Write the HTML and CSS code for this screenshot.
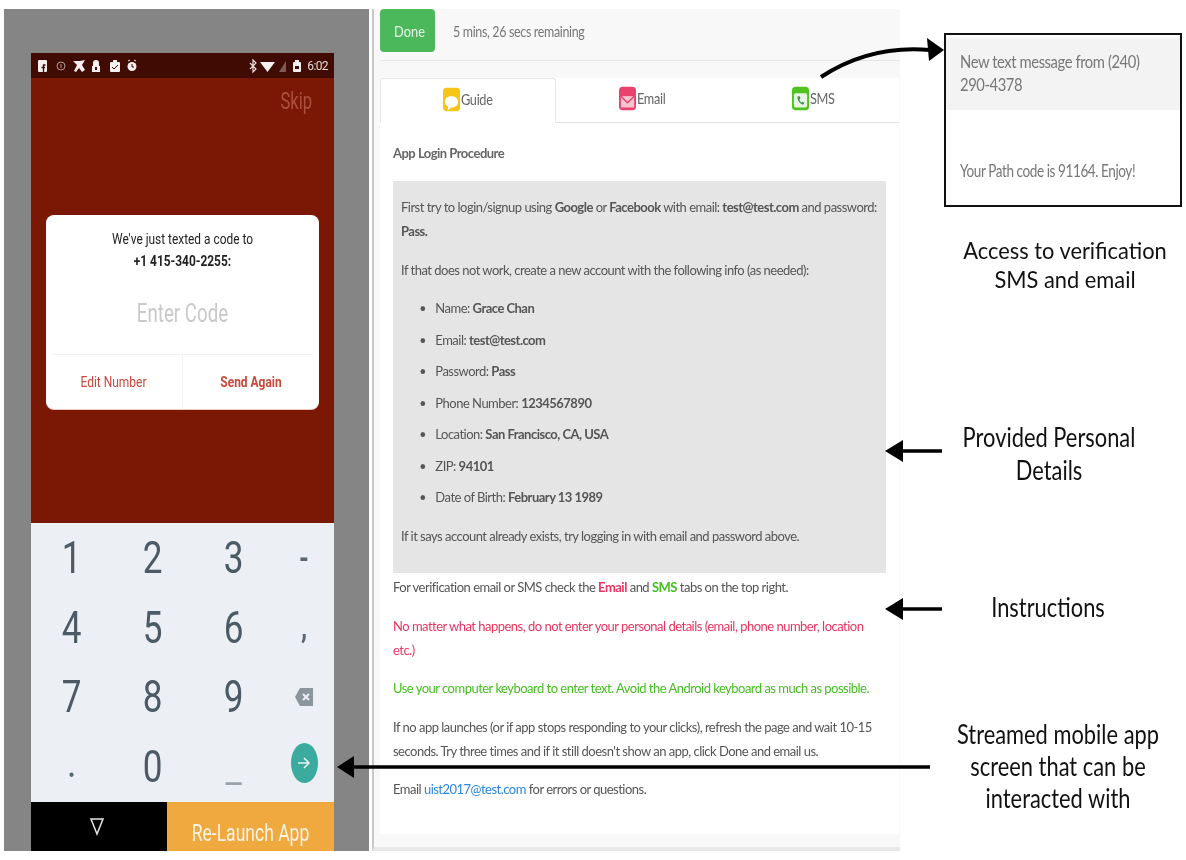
FILE: index.html
```html
<!DOCTYPE html>
<html lang="en">
<head>
    <meta charset="UTF-8">
    <title>Streamed app study figure</title>
    <link rel="stylesheet" href="styles.css">
</head>
<body>
    <div class="figure">
        <div class="device-panel">
            <div class="phone">
                <div class="status-bar">
                    <svg class="status-icons left" width="112" height="16" viewBox="0 0 112 16">
                        <rect x="7" y="2" width="9" height="12" rx="1" fill="#f4eeee"/>
                        <path d="M12.500 14V7h2M10.500 9.500h3.500" stroke="#3f0b02" stroke-width="1.300" fill="none"/>
                        <circle cx="30" cy="8" r="4" fill="none" stroke="#b59a94"/>
                        <path d="M30 6v4" stroke="#b59a94"/>
                        <path d="M42 3h7l5-1-3 5 3 5-3 2-3-4-3 4-2-1 3-6z" fill="#f4eeee"/>
                        <path d="M62 8V5a3 3 0 0 1 6 0v3h1v6h-8V8z" fill="#f4eeee"/>
                        <rect x="64" y="9" width="2" height="3" fill="#3f0b02"/>
                        <rect x="79" y="4" width="10" height="10" rx="1" fill="#f4eeee"/>
                        <rect x="82" y="2" width="4" height="2" fill="#f4eeee"/>
                        <path d="M81 9l2 2 4-4" stroke="#3f0b02" fill="none"/>
                        <circle cx="101" cy="8.500" r="4.500" fill="#f4eeee"/>
                        <path d="M97 3l2-1M105 3l-2-1" stroke="#f4eeee"/>
                        <path d="M101 6v3h2" stroke="#3f0b02" fill="none"/>
                    </svg>
                    <svg class="status-icons" width="56" height="16" viewBox="0 0 56 16">
                        <path d="M2 5l6 6-3 3V2l3 3-6 6" stroke="#e8dcda" stroke-width="1.200" fill="none"/>
                        <path d="M12 4h15l-7.500 10z" fill="#f6f2f2"/>
                        <path d="M31 14l7-11v11z" fill="#7d5a52"/>
                        <rect x="45" y="4" width="8" height="10" rx="1" fill="#f4eeee"/>
                        <rect x="47" y="2" width="4" height="2" fill="#f4eeee"/>
                        <rect x="47" y="8" width="4" height="3" fill="#3f0b02"/>
                    </svg>
                    <span class="clock">6:02</span>
                </div>
                <div class="app-screen">
                    <div class="skip">Skip</div>
                    <div class="code-dialog">
                        <div class="code-msg">We've just texted a code to<br><strong>+1 415-340-2255:</strong></div>
                        <div class="code-input">Enter Code</div>
                        <div class="code-actions">
                            <div class="code-btn edit"><span>Edit Number</span></div>
                            <div class="code-btn send"><span>Send Again</span></div>
                        </div>
                    </div>
                </div>
                <div class="keypad">
                    <span class="key">1</span><span class="key">2</span><span class="key">3</span><span class="key small">-</span>
                    <span class="key">4</span><span class="key">5</span><span class="key">6</span><span class="key small">,</span>
                    <span class="key">7</span><span class="key">8</span><span class="key">9</span>
                    <span class="key icon">
                        <svg width="20" height="22" viewBox="0 0 20 22">
                            <path d="M6 2h13v18H6l-5-9z" fill="#8b959c"/>
                            <path d="M9 8l6 6M15 8l-6 6" stroke="#eceff3" stroke-width="2"/>
                        </svg>
                    </span>
                    <span class="key small">.</span><span class="key">0</span><span class="key underscore">_</span>
                    <span class="key icon">
                        <span class="go-btn">
                            <svg width="14" height="16" viewBox="0 0 14 16">
                                <path d="M1 8h11M7 3l5 5-5 5" stroke="#e8f5f3" stroke-width="1.500" fill="none"/>
                            </svg>
                        </span>
                    </span>
                </div>
                <div class="phone-bottom">
                    <div class="nav-back">
                        <svg width="14" height="19" viewBox="0 0 14 19">
                            <path d="M1 2h12L7 17z" fill="none" stroke="#e6e6e6" stroke-width="1.500"/>
                        </svg>
                    </div>
                    <div class="relaunch"><span>Re-Launch App</span></div>
                </div>
            </div>
        </div>

        <div class="web-panel">
            <div class="top-row">
                <button class="done-btn"><span>Done</span></button>
                <span class="time-left">5 mins, 26 secs remaining</span>
            </div>
            <div class="card">
                <div class="tabs">
                    <div class="tab active">
                        <svg class="tab-icon" width="17" height="25" viewBox="0 0 18 25">
                            <rect width="18" height="25" rx="4" fill="#f6c516"/>
                            <path d="M9 9c4 0 7 2 7 6s-3 6-7 6l-4 3 .5-4C3 19 2 17 2 15c0-4 3-6 7-6z" fill="#fff"/>
                        </svg>
                        <span class="tab-label">Guide</span>
                    </div>
                    <div class="tab">
                        <svg class="tab-icon" width="17" height="25" viewBox="0 0 18 25">
                            <rect width="18" height="25" rx="4" fill="#e9436d"/>
                            <rect x="2" y="10" width="14" height="12" fill="#f7c4d0"/>
                            <path d="M2 10l7 7 7-7" fill="none" stroke="#e9436d" stroke-width="1.500"/>
                        </svg>
                        <span class="tab-label">Email</span>
                    </div>
                    <div class="tab">
                        <svg class="tab-icon" width="17" height="25" viewBox="0 0 18 25">
                            <rect width="18" height="25" rx="4" fill="#4fc31f"/>
                            <rect x="2" y="7" width="14" height="15" rx="2" fill="#e8f5e4"/>
                            <path d="M6 10c-1 3 2 8 6 9l1-2-2-1-1 1c-1-1-2-2-2-4l1-1-1-2z" fill="#3c8f4a"/>
                        </svg>
                        <span class="tab-label">SMS</span>
                    </div>
                </div>
                <div class="guide">
                    <h4 class="guide-title">App Login Procedure</h4>
                    <div class="details-box">
                        <p>First try to login/signup using <b>Google</b> or <b>Facebook</b> with email: <b>test@test.com</b> and password:<br><b>Pass.</b></p>
                        <p>If that does not work, create a new account with the following info (as needed):</p>
                        <ul class="details-list">
                            <li>Name: <b>Grace Chan</b></li>
                            <li>Email: <b>test@test.com</b></li>
                            <li>Password: <b>Pass</b></li>
                            <li>Phone Number: <b>1234567890</b></li>
                            <li>Location: <b>San Francisco, CA, USA</b></li>
                            <li>ZIP: <b>94101</b></li>
                            <li>Date of Birth: <b>February 13 1989</b></li>
                        </ul>
                        <p>If it says account already exists, try logging in with email and password above.</p>
                    </div>
                    <p class="first">For verification email or SMS check the <b class="red">Email</b> and <b class="green">SMS</b> tabs on the top right.</p>
                    <p class="red">No matter what happens, do not enter your personal details (email, phone number, location<br>etc.)</p>
                    <p class="green">Use your computer keyboard to enter text. Avoid the Android keyboard as much as possible.</p>
                    <p>If no app launches (or if app stops responding to your clicks), refresh the page and wait 10-15<br>seconds. Try three times and if it still doesn't show an app, click Done and email us.</p>
                    <p>Email <span class="blue">uist2017@test.com</span> for errors or questions.</p>
                </div>
            </div>
        </div>

        <div class="notes">
            <div class="sms-box">
                <div class="sms-head">
                    <span class="sms-line">New text message from (240)</span>
                    <span class="sms-line">290-4378</span>
                </div>
                <div class="sms-body">
                    <span class="sms-line">Your Path code is 91164. Enjoy!</span>
                </div>
            </div>
            <div class="note note-access">Access to verification<br>SMS and email</div>
            <div class="note note-details">Provided Personal<br>Details</div>
            <div class="note note-instr">Instructions</div>
            <div class="note note-stream">Streamed mobile app<br>screen that can be<br>interacted with</div>
        </div>

        <svg class="arrows" width="1186" height="860" viewBox="0 0 1186 860">
            <path d="M821 77C850 58 885 46 930 50" fill="none" stroke="#000" stroke-width="4"/>
            <path d="M944 50l-17-12 2 23z" fill="#000"/>
            <path d="M900 451h42M900 609h42M350 767h580" fill="none" stroke="#000" stroke-width="3.500"/>
            <path d="M885 451l18-11v22zM885 609l18-11v22zM337 767l17-11v22z" fill="#000"/>
        </svg>
    </div>
</body>
</html>
```

FILE: styles.css
```css
body {
    margin: 0;
    background: #fff;
    font-family: "Lato", sans-serif;
}
.figure {
    position: relative;
    width: 1186px;
    height: 860px;
    display: flex;
    overflow: hidden;
    padding-top: 9px;
    box-sizing: border-box;
}

/* phone side */
.device-panel {
    width: 365px;
    height: 842px;
    margin-left: 4px;
    background: #858585;
    padding: 44px 35px 0 27px;
    box-sizing: border-box;
    flex-shrink: 0;
    filter: blur(.4px);
}
.phone {
    height: 798px;
    display: flex;
    flex-direction: column;
    font-family: "Roboto", sans-serif;
}
.status-bar {
    height: 25px;
    background: #3f0b02;
    display: flex;
    align-items: center;
    color: #e8dcda;
    font-size: 12px;
    padding: 0 6px 0 0;
}
.status-icons {
    flex-shrink: 0;
}
.status-icons.left {
    margin-right: auto;
}
.clock {
    margin-left: 3px;
    letter-spacing: -.6px;
}
.app-screen {
    height: 445px;
    background: #7a1805;
    box-sizing: border-box;
    padding: 11px 15px 0;
}
.skip {
    text-align: right;
    color: #a9513f;
    font-size: 23px;
    line-height: 26px;
    margin-right: 7px;
    transform: scaleX(.72);
    transform-origin: right;
}
.code-dialog {
    background: #fff;
    border-radius: 8px;
    height: 194px;
    margin-top: 100px;
    display: flex;
    flex-direction: column;
    box-shadow: 0 1px 0 #e9c9c2;
}
.code-msg {
    text-align: center;
    color: #222;
    font-size: 14px;
    line-height: 22px;
    padding-top: 13px;
    transform: scaleX(.85);
}
.code-msg strong {
    font-weight: 700;
}
.code-input {
    text-align: center;
    color: #c9c9c9;
    font-size: 26px;
    line-height: 30px;
    margin-top: 26px;
    transform: scaleX(.72);
}
.code-actions {
    margin: auto 6px 0;
    height: 54px;
    border-top: 1px solid #f4f1f0;
    display: flex;
}
.code-btn {
    text-align: center;
    color: #c8483a;
    font-size: 14.500px;
    line-height: 56px;
    box-sizing: border-box;
}
.code-btn span {
    display: block;
    transform: scaleX(.825);
}
.code-btn.edit {
    width: 131px;
    padding-right: 7px;
    border-right: 1px solid #f6f3f2;
}
.code-btn.send {
    flex: 1;
    font-weight: 700;
    padding-left: 6px;
}
.keypad {
    flex: 1;
    background: #eceff3;
    display: grid;
    grid-template-columns: 81px 81px 81px 60px;
    grid-auto-rows: 69.500px;
    color: #4b5a64;
}
.key {
    display: flex;
    align-items: center;
    justify-content: center;
    font-size: 45px;
    transform: scaleX(.78);
}
.key.icon {
    transform: none;
}
.key.small {
    font-size: 32px;
    font-weight: 700;
    color: #5a6770;
}
.key.underscore {
    color: #9aa3aa;
    font-size: 36px;
    padding-top: 8px;
    box-sizing: border-box;
    transform: none;
}
.go-btn {
    width: 27px;
    height: 40px;
    margin-bottom: 6px;
    border-radius: 50%;
    background: #3aab9e;
    display: flex;
    align-items: center;
    justify-content: center;
}
.phone-bottom {
    height: 49px;
    display: flex;
}
.nav-back {
    width: 136px;
    background: #000;
    display: flex;
    align-items: center;
    justify-content: center;
    padding-right: 5px;
    box-sizing: border-box;
}
.relaunch {
    flex: 1;
    background: #efa93f;
    color: #fdf3e2;
    text-align: center;
    font-size: 24px;
    line-height: 62px;
    overflow: hidden;
    white-space: nowrap;
}
.relaunch span {
    display: block;
    transform: scaleX(.73);
}

/* web side */
.web-panel {
    width: 528px;
    height: 842px;
    margin-left: 3px;
    border-left: 2px solid #c8c8c8;
    border-bottom: 4px solid #e8e8e8;
    background: #f8f8f8;
    box-sizing: border-box;
    padding-left: 6px;
    padding-right: 1px;
    flex-shrink: 0;
    color: #555;
    font-size: 14px;
    filter: blur(.4px);
}
.top-row {
    display: flex;
    align-items: center;
    gap: 18px;
    border-bottom: 1px solid #e4e4e4;
    margin-right: -1px;
    padding-bottom: 8px;
    height: 43px;
}
.done-btn {
    width: 55px;
    height: 43px;
    border: none;
    border-radius: 4px;
    background: #4cb85c;
    color: #e6f6e8;
    font-family: inherit;
    font-size: 16px;
    padding: 0 0 0 4px;
}
.done-btn span {
    display: block;
    transform: scaleX(.8);
}
.time-left {
    color: #777;
    font-size: 15px;
    letter-spacing: -.4px;
    transform: scaleX(.83);
    transform-origin: left;
}
.card {
    background: #fff;
    margin-top: 17px;
    height: 756px;
}
.tabs {
    display: flex;
    height: 45px;
    background: #fff;
}
.tab {
    flex: 1;
    display: flex;
    align-items: center;
    justify-content: center;
    gap: 1px;
    padding-bottom: 4px;
    box-sizing: border-box;
    border-bottom: 1px solid #e2e2e2;
    font-size: 15px;
    letter-spacing: -.4px;
    color: #666;
}
.tab.active {
    flex: 0 0 176px;
    border: 1px solid #e6e6e6;
    border-bottom: none;
    border-radius: 3px 3px 0 0;
}
.tab-icon {
    flex-shrink: 0;
}
.tab-label {
    transform: scaleX(.85);
    transform-origin: left;
    margin-right: -5px;
}
.guide {
    padding: 0 13px;
    line-height: 24px;
    letter-spacing: -.55px;
    color: #555;
}
.guide p {
    margin: 0 0 14.500px;
    white-space: nowrap;
}
.guide p,
.guide-title,
.details-list {
    transform: scaleX(.928);
    transform-origin: left;
}
.guide p.first {
    margin-top: 2px;
}
.guide-title {
    margin: 18px 0 16px;
    font-size: 14px;
    font-weight: 700;
    line-height: 24px;
    color: #666;
}
.details-box {
    background: #e5e5e5;
    padding: 14px 8px 10px;
    height: 392px;
    box-sizing: border-box;
}
.details-list {
    margin: 0 0 15px;
    padding-left: 37px;
}
.details-list li {
    margin-bottom: 7.500px;
}
.red { color: #e8365f; }
.green { color: #45bf22; }
.blue { color: #2a86e0; }

/* annotations */
.notes {
    flex: 1;
    display: flex;
    flex-direction: column;
    color: #111;
    font-size: 27px;
}
.sms-box {
    width: 238px;
    height: 174px;
    margin: 24px 0 0 44px;
    box-sizing: border-box;
    border: 2px solid #111;
    background: #fff;
    font-size: 18px;
    color: #777;
    letter-spacing: -.5px;
}
.sms-head {
    height: 72px;
    margin-top: 3px;
    background: #f3f3f3;
    padding: 12px 0 0 14px;
    box-sizing: border-box;
    line-height: 23px;
}
.sms-body {
    padding: 51px 0 0 14px;
    font-size: 16.500px;
}
.sms-line {
    display: block;
    white-space: nowrap;
    transform: scaleX(.82);
    transform-origin: left;
}
.note {
    text-align: center;
    width: 260px;
    line-height: 28px;
    transform: scaleX(.81);
    white-space: nowrap;
}
.note-access {
    margin: 28px 0 0 35px;
    font-size: 24px;
    line-height: 29px;
    transform: scaleX(.91);
}
.note-details { margin: 127px 0 0 19px; line-height: 33px; }
.note-instr { margin: 106px 0 0 18px; line-height: 29px; }
.note-stream { margin: 97px 0 0 28px; line-height: 32px; }

.arrows {
    position: absolute;
    left: 0;
    top: 0;
    pointer-events: none;
}
```
